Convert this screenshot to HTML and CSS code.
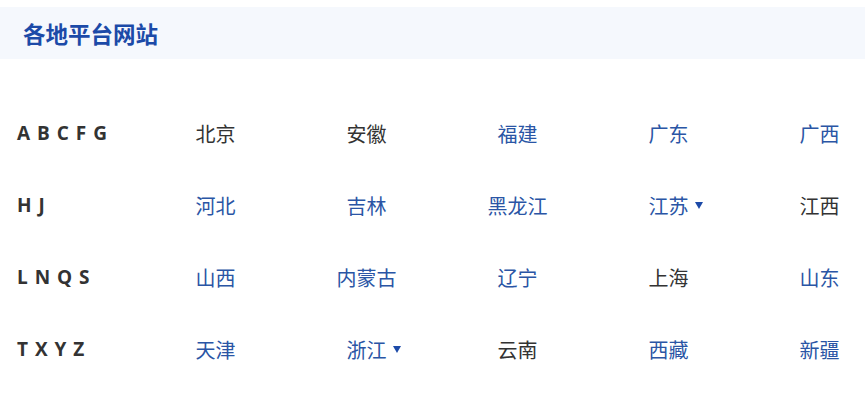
FILE: index.html
```html
<!DOCTYPE html>
<html lang="zh-CN">
<head>
<meta charset="utf-8">
<title>各地平台网站</title>
<link rel="stylesheet" href="styles.css">
</head>
<body>
<div class="panel">
  <div class="head"><h2 class="title">各地平台网站</h2></div>
  <div class="list">
    <div class="row">
      <div class="label">A B C F G</div>
      <a class="cell dark">北京</a>
      <a class="cell dark">安徽</a>
      <a class="cell">福建</a>
      <a class="cell">广东</a>
      <a class="cell">广西</a>
    </div>
    <div class="row">
      <div class="label">H J</div>
      <a class="cell">河北</a>
      <a class="cell">吉林</a>
      <a class="cell">黑龙江</a>
      <a class="cell"><span class="drop">江苏</span></a>
      <a class="cell dark">江西</a>
    </div>
    <div class="row">
      <div class="label">L N Q S</div>
      <a class="cell">山西</a>
      <a class="cell">内蒙古</a>
      <a class="cell">辽宁</a>
      <a class="cell dark">上海</a>
      <a class="cell">山东</a>
    </div>
    <div class="row">
      <div class="label">T X Y Z</div>
      <a class="cell">天津</a>
      <a class="cell"><span class="drop">浙江</span></a>
      <a class="cell dark">云南</a>
      <a class="cell">西藏</a>
      <a class="cell">新疆</a>
    </div>
  </div>
</div>
</body>
</html>
```
FILE: styles.css
```css
html, body {
  margin: 0;
  padding: 0;
  background: #ffffff;
}
body {
  font-family: "Noto Sans CJK SC", "Open Sans", sans-serif;
  overflow: hidden;
}
.panel {
  width: 865px;
  padding-top: 7px;
}
.head {
  height: 52px;
  background: #f5f8fd;
  padding-left: 23px;
  display: flex;
  align-items: center;
}
.title {
  margin: 0;
  font-size: 22.5px;
  font-weight: 700;
  color: #1c4aa8;
  line-height: 1;
}
.list {
  padding-top: 38px;
  overflow: hidden;
}
.row {
  display: flex;
  align-items: center;
  height: 72px;
  padding-left: 17px;
}
.label {
  flex: 0 0 123px;
  font-family: "Open Sans", "Noto Sans CJK SC", sans-serif;
  font-weight: 700;
  font-size: 19px;
  letter-spacing: 1px;
  color: #333333;
}
.cell {
  flex: 0 0 151px;
  text-align: center;
  font-size: 20px;
  color: #2a55a5;
  text-decoration: none;
  white-space: nowrap;
}
.cell.dark {
  color: #333333;
}
.drop {
  position: relative;
}
.drop::after {
  content: "";
  position: absolute;
  right: -14px;
  top: 50%;
  margin-top: -3px;
  border-left: 4.5px solid transparent;
  border-right: 4.5px solid transparent;
  border-top: 7px solid #1c4aa8;
}
```
